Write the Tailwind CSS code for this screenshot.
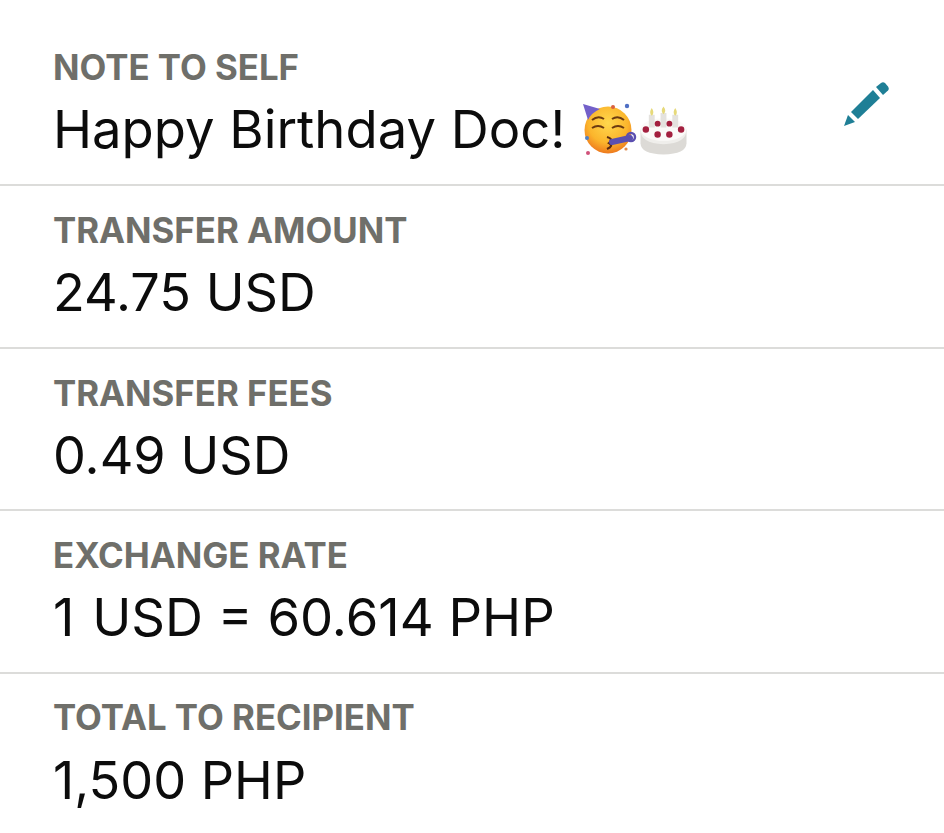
<!DOCTYPE html>
<html lang="en">
  <head>
    <meta charset="UTF-8" />
    <title>Transfer details</title>
    <script src="https://cdn.jsdelivr.net/npm/@tailwindcss/browser@4"></script>
  </head>
  <body class="bg-white font-['Inter',sans-serif] h-[833px] overflow-hidden">
    <div class="flex flex-col">
      <div class="h-[186px] pt-[47px] pl-[53px] pr-[55px] border-b-2 border-[#dcdcda] flex justify-between">
        <div>
          <div class="text-[34.8px] leading-[40px] font-bold text-[#6f6f6a]">NOTE TO SELF</div>
          <div class="flex items-center mt-[12px] h-[60px]">
            <span class="text-[52.6px] leading-[60px] text-[#0c0c0c]">Happy Birthday Doc!</span>
            <!-- party face -->
            <svg viewBox="0 0 56 54" class="w-[56px] h-[54px] ml-[16px] mt-[-2px]">
              <defs>
                <radialGradient id="face" cx="50%" cy="35%" r="65%">
                  <stop offset="0%" stop-color="#ffd84d" />
                  <stop offset="65%" stop-color="#fbb52c" />
                  <stop offset="100%" stop-color="#ee7a1e" />
                </radialGradient>
              </defs>
              <circle cx="27" cy="29" r="23.5" fill="url(#face)" />
              <path d="M2 3 L19 8 Q10 12 7 19 Z" fill="#7360c9" />
              <circle cx="32" cy="6" r="2" fill="#d9603f" />
              <circle cx="46" cy="5" r="2.2" fill="#4f6fc4" />
              <circle cx="6" cy="37" r="2" fill="#4f7fc4" />
              <circle cx="7" cy="52" r="2" fill="#d0527a" />
              <circle cx="45" cy="48" r="1.6" fill="#e08a4a" />
              <path d="M11 19 Q17 14 23 18 M31 18 Q37 14 43 19" fill="none" stroke="#6b3a10" stroke-width="2" />
              <path d="M11 27 Q17 23 23 27 M31 27 Q37 23 43 27" fill="none" stroke="#6b3a10" stroke-width="2" />
              <path d="M26 36 Q33 38 28 42 Q33 45 26 48" fill="none" stroke="#5a2a10" stroke-width="2.2" />
              <path d="M31 41 L49 37" stroke="#5b4fb0" stroke-width="6" stroke-linecap="round" />
              <circle cx="50" cy="36" r="4" fill="none" stroke="#5b4fb0" stroke-width="2.5" />
            </svg>
            <!-- cake -->
            <svg viewBox="0 0 48 50" class="w-[47px] h-[49px] ml-[3px] mt-[3px]">
              <path d="M0.5 24 H47.5 V38 Q47 49 24 49.5 Q1 49 0.5 38 Z" fill="#dcdad6" />
              <path d="M0.5 24 Q0 38 24 39 Q48 38 47.5 24 Z" fill="#efeeeb" />
              <ellipse cx="24" cy="24" rx="23.5" ry="11.5" fill="#fbfaf8" />
              <path d="M9 9 h6 v13 h-6 z M21 7 h6 v15 h-6 z M33 9 h6 v13 h-6 z" fill="#e4e2de" />
              <path d="M12 2 Q15.5 7 12 10 Q8.5 7 12 2 M24 0.5 Q27.5 5 24 8.5 Q20.5 5 24 0.5 M36 2 Q39.5 7 36 10 Q32.5 7 36 2" fill="#e6d97a" />
              <g fill="#a3203f">
                <circle cx="6" cy="24" r="3.3" />
                <circle cx="18" cy="29" r="3.3" />
                <circle cx="30" cy="29" r="3.3" />
                <circle cx="42" cy="24" r="3.3" />
                <circle cx="18" cy="18" r="3" />
                <circle cx="30" cy="18" r="3" />
              </g>
            </svg>
          </div>
        </div>
        <svg viewBox="0 0 46 46" class="w-[46px] h-[46px] mt-[34px]" fill="#1f7f96">
          <path d="M1 45 L5 34 L12 41 Z" />
          <path d="M8 31 L30 9 L37 17 L15 38 Z" />
          <path d="M33 6 L38 2 Q40 0.5 42 2 L45 5.5 Q46.5 8 45 9.5 L40 14 Z" />
        </svg>
      </div>
      <div class="h-[163px] pt-[24px] pl-[53px] border-b-2 border-[#dcdcda]">
        <div class="text-[34.8px] leading-[40px] font-bold text-[#6f6f6a]">TRANSFER AMOUNT</div>
        <div class="text-[52.2px] leading-[60px] text-[#0c0c0c] mt-[12px]">24.75 USD</div>
      </div>
      <div class="h-[162px] pt-[24px] pl-[53px] border-b-2 border-[#dcdcda]">
        <div class="text-[34.8px] leading-[40px] font-bold text-[#6f6f6a]">TRANSFER FEES</div>
        <div class="text-[52.2px] leading-[60px] text-[#0c0c0c] mt-[12px]">0.49 USD</div>
      </div>
      <div class="h-[163px] pt-[24px] pl-[53px] border-b-2 border-[#dcdcda]">
        <div class="text-[34.8px] leading-[40px] font-bold text-[#6f6f6a]">EXCHANGE RATE</div>
        <div class="text-[52.6px] leading-[60px] text-[#0c0c0c] mt-[12px]"><span class="mr-[3px]">1</span> USD = 60.614 PHP</div>
      </div>
      <div class="pt-[23px] pl-[53px]">
        <div class="text-[34.8px] leading-[40px] font-bold text-[#6f6f6a]">TOTAL TO RECIPIENT</div>
        <div class="text-[52.2px] leading-[60px] text-[#0c0c0c] mt-[13px]">1,500 PHP</div>
      </div>
    </div>
  </body>
</html>
